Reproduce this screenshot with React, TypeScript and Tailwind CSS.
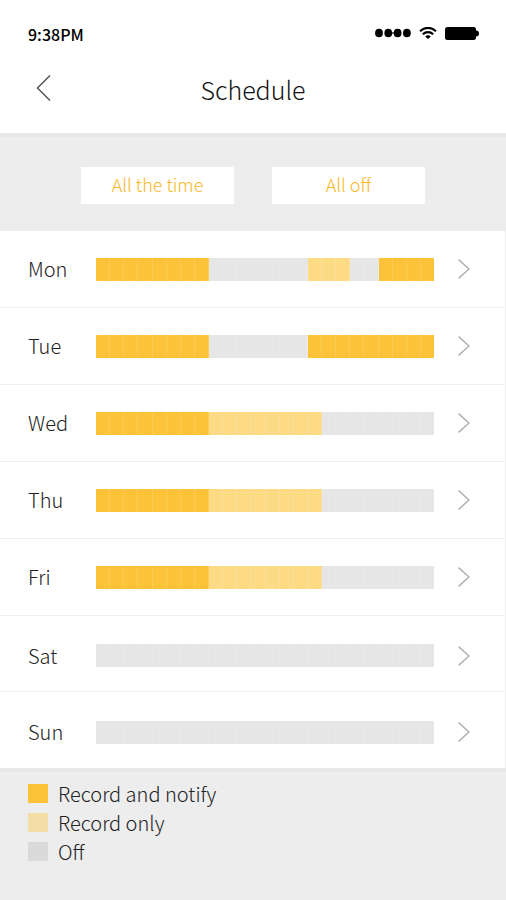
import React, { useState } from 'react';

type Mode = 'notify' | 'record' | 'off';

interface Day {
  name: string;
  hours: Mode[];
  weekend?: boolean;
}

const modeColors: Record<Mode, string> = {
  notify: 'bg-[#fcc338]',
  record: 'bg-[#fddb85]',
  off: 'bg-[#e6e6e6]',
};

const fill = (mode: Mode, count: number): Mode[] => Array(count).fill(mode);

const initialDays: Day[] = [
  { name: 'Mon', hours: [...fill('notify', 8), ...fill('off', 7), ...fill('record', 3), ...fill('off', 2), ...fill('notify', 4)] },
  { name: 'Tue', hours: [...fill('notify', 8), ...fill('off', 7), ...fill('notify', 9)] },
  { name: 'Wed', hours: [...fill('notify', 8), ...fill('record', 8), ...fill('off', 8)] },
  { name: 'Thu', hours: [...fill('notify', 8), ...fill('record', 8), ...fill('off', 8)] },
  { name: 'Fri', hours: [...fill('notify', 8), ...fill('record', 8), ...fill('off', 8)] },
  { name: 'Sat', hours: fill('off', 24), weekend: true },
  { name: 'Sun', hours: fill('off', 24), weekend: true },
];

const legend = [
  { label: 'Record and notify', color: 'bg-[#fcc338]' },
  { label: 'Record only', color: 'bg-[#f3dfa5]' },
  { label: 'Off', color: 'bg-[#dadada]' },
];

const StatusBar: React.FC = () => (
  <div className="flex items-center justify-between pl-7 pr-[27px] pt-6">
    <span className="text-base leading-5 font-medium text-black">9:38PM</span>
    <div className="flex items-center gap-2 pb-0.5">
      <svg className="w-9 h-3" viewBox="0 0 36 12" fill="#000">
        <ellipse cx="4" cy="6" rx="3.9" ry="4.3" />
        <ellipse cx="13.3" cy="6" rx="3.9" ry="4.3" />
        <ellipse cx="22.6" cy="6" rx="3.9" ry="4.3" />
        <ellipse cx="31.9" cy="6" rx="3.9" ry="4.3" />
        <path d="M13 5.400h9v1.200h-9z" />
      </svg>
      <svg className="w-[18px] h-3" viewBox="0 0 18 12" fill="none" stroke="#000" strokeWidth="2.2">
        <path d="M1 4.2C5.600-.2 12.400-.2 17 4.200" />
        <path d="M3.800 7.200c3-2.800 7.400-2.800 10.400 0" />
        <path d="M6.200 9.400c1.600-1.500 4-1.500 5.600 0L9 12z" fill="#000" stroke="none" />
      </svg>
      <svg className="w-[34px] h-[13px]" viewBox="0 0 34 13" fill="#000">
        <rect width="31" height="13" rx="2.5" />
        <path d="M31 3.500c2 0 3 1.300 3 3s-1 3-3 3z" />
      </svg>
    </div>
  </div>
);

const DayRow: React.FC<{ day: Day }> = ({ day }) => (
  <button
    className={`flex w-full items-center border-b border-[#f0f0f0] bg-white pl-7 pr-[35px] text-left last:border-b-0 ${
      day.weekend ? 'h-[76px] pt-1' : 'h-[77px]'
    }`}
  >
    <span className="w-[68px] text-xl leading-6 text-[#222]">{day.name}</span>
    <span className="flex h-[23px] flex-1">
      {day.hours.map((mode, i) => (
        <span key={i} className={`flex-1 border-r border-white/15 last:border-r-0 ${modeColors[mode]}`} />
      ))}
    </span>
    <svg className="ml-6 w-3 h-5" viewBox="0 0 12 20" fill="none" stroke="#b0b0b0" strokeWidth="1.5">
      <path d="M0.600 0.600L11 10L0.600 19.400" />
    </svg>
  </button>
);

const App: React.FC = () => {
  const [days, setDays] = useState(initialDays);

  const setAll = (mode: Mode) => setDays(prev => prev.map(d => ({ ...d, hours: fill(mode, 24) })));

  return (
    <div className="min-h-screen bg-[#ededed] font-['Noto_Sans_CJK_SC','Noto_Sans',sans-serif] font-light">
      {/* Header */}
      <header className="h-[133px] bg-white">
        <StatusBar />
        <div className="grid grid-cols-[1fr_auto_1fr] items-center px-9 pt-[29px]">
          <button aria-label="Back" className="justify-self-start pb-0.5">
            <svg className="w-4 h-7" viewBox="0 0 16 28" fill="none" stroke="#555" strokeWidth="1.500">
              <path d="M14 1.500L1.500 14L14 26.500" />
            </svg>
          </button>
          <h1 className="text-[25px] leading-8 text-[#111]">Schedule</h1>
        </div>
      </header>

      {/* Quick actions */}
      <div className="flex justify-center gap-[38px] border-t-4 border-[#e8e8e8] pt-[30px] pb-[27px]">
        <button onClick={() => setAll('notify')} className="h-[37px] w-[153px] bg-white pb-1 text-lg leading-6 text-[#fbb928]">
          All the time
        </button>
        <button onClick={() => setAll('off')} className="h-[37px] w-[153px] bg-white pb-1 text-lg leading-6 text-[#fbb928]">
          All off
        </button>
      </div>

      {/* Week */}
      <main className="border-r border-[#f0f0f0]">
        {days.map(day => (
          <DayRow key={day.name} day={day} />
        ))}
      </main>

      {/* Legend */}
      <ul className="border-t-4 border-[#e8e8e8] pl-7 pt-[7px]">
        {legend.map(item => (
          <li key={item.label} className="flex h-[29px] items-center gap-[10px]">
            <span className={`h-[19px] w-5 ${item.color}`} />
            <span className="text-xl leading-6 text-[#222]">{item.label}</span>
          </li>
        ))}
      </ul>
    </div>
  );
};

export default App;
